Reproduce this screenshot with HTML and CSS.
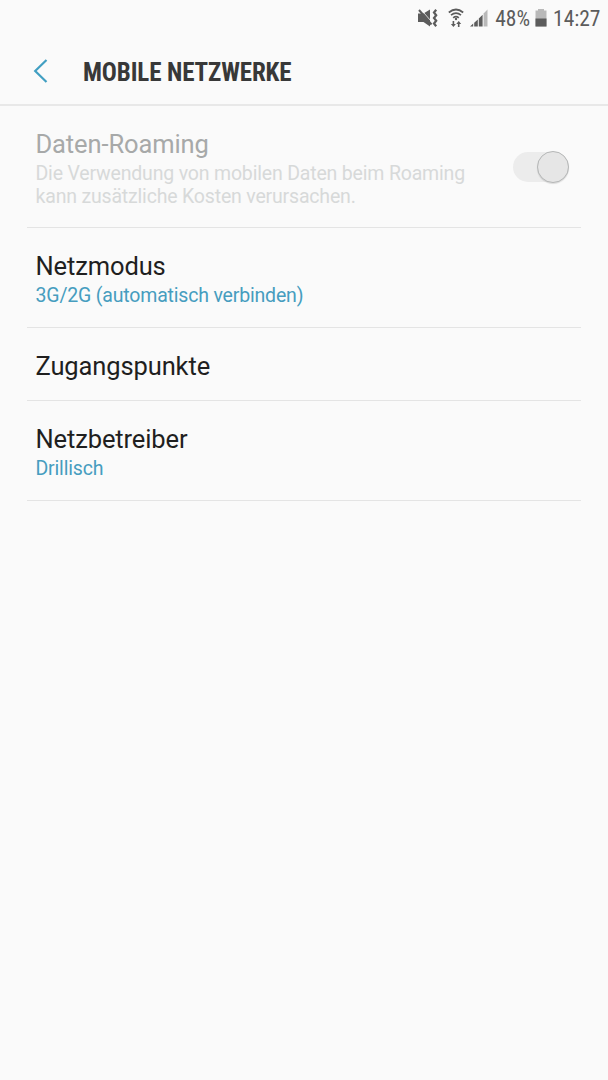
FILE: index.html
```html
<!DOCTYPE html>
<html lang="de">
<head>
  <meta charset="UTF-8" />
  <title>Mobile Netzwerke</title>
  <meta name="viewport" content="width=device-width, initial-scale=1.0" />
  <link rel="stylesheet" href="styles.css">
</head>

<body>

  <!-- Status bar -->
  <div class="status-bar">
    <svg class="icon-mute" width="20" height="18" viewBox="0 0 20 18">
      <path d="M0 4.500h5.500L12 .5v17l-6.500-4.500H0z" fill="#5c5c5c" />
      <path d="M2.500 0L14 13.200" stroke="#fafafa" stroke-width=".8" />
      <path d="M1 1l12.500 14.500" stroke="#5c5c5c" stroke-width="2" />
      <path d="M18.200.8l-2.200 2.700 2.200 2.700L16 9l2.200 2.700-2.200 2.800 2.200 2.700" fill="none" stroke="#5c5c5c" stroke-width="2.200" />
    </svg>
    <svg class="icon-wifi" width="16" height="20" viewBox="0 0 16 20">
      <g fill="none" stroke="#5c5c5c" stroke-width="1.700">
        <path d="M.8 4.500Q8-1.500 15.200 4.500" />
        <path d="M3 7.200Q8 3 13 7.200" />
        <path d="M5.200 9.800Q8 7.400 10.800 9.800" />
      </g>
      <circle cx="8" cy="11" r="1.200" fill="#5c5c5c" />
      <path d="M4.600 13v3H2.900l2.500 3 2.500-3H6.200v-3zM9.900 19v-3H8.200l2.500-3 2.500 3h-1.700v3z" fill="#5c5c5c" />
    </svg>
    <svg class="icon-signal" width="18" height="18" viewBox="0 0 18 18">
      <path d="M0 17.500h3.200v-3zM4.200 17.500h3.600v-7l-3.600 3.200zM8.800 17.500h3.800V5.800L8.800 9.500z" fill="#5c5c5c" />
      <path d="M13.600 17.500h3.900V.5l-3.900 4z" fill="#b9b9b9" />
    </svg>
    <span class="battery-level">48%</span>
    <svg class="icon-battery" width="12" height="18" viewBox="0 0 12 18">
      <path d="M3 0h6v1.500h2.500V17.500H.5V1.500H3z" fill="#b9b9b9" />
      <path d="M.5 9.500h11v8H.5z" fill="#5c5c5c" />
    </svg>
    <span class="clock">14:27</span>
  </div>

  <!-- Title bar -->
  <header>
    <svg class="back" width="16" height="26" viewBox="0 0 16 26">
      <path d="M13.500 2L2.200 13l11.300 11" fill="none" stroke="#419fc2" stroke-width="2.200" />
    </svg>
    <h1>MOBILE NETZWERKE</h1>
  </header>

  <!-- Settings -->
  <main>
    <section class="item disabled">
      <div class="text">
        <h2>Daten-Roaming</h2>
        <p>Die Verwendung von mobilen Daten beim Roaming kann zusätzliche Kosten verursachen.</p>
      </div>
      <div class="switch"><div class="thumb"></div></div>
    </section>
    <section class="item">
      <div class="text">
        <h2>Netzmodus</h2>
        <p>3G/2G (automatisch verbinden)</p>
      </div>
    </section>
    <section class="item single">
      <div class="text">
        <h2>Zugangspunkte</h2>
      </div>
    </section>
    <section class="item">
      <div class="text">
        <h2>Netzbetreiber</h2>
        <p>Drillisch</p>
      </div>
    </section>
  </main>

</body>
</html>
```
FILE: styles.css
```css
* {
  box-sizing: border-box;
}

body {
  margin: 0;
  min-height: 1080px;
  background-color: #fafafa;
  font-family: Roboto, sans-serif;
  color: #1f1f1f;
}

h1, h2, p {
  margin: 0;
  font-weight: normal;
}

/* Status bar */
.status-bar {
  display: flex;
  justify-content: flex-end;
  align-items: center;
  height: 36px;
  padding-right: 7.500px;
  font-family: "Roboto Condensed", Roboto, sans-serif;
  font-stretch: 75%;
  font-size: 21.500px;
  color: #5c5c5c;
}

.icon-mute {
  margin-right: 10px;
}

.icon-wifi {
  margin-right: 6px;
}

.icon-signal {
  margin-right: 7px;
}

.icon-battery {
  margin: 0 6px 0 5px;
}

/* Title bar */
header {
  display: flex;
  align-items: center;
  height: 70px;
  padding: 2px 0 0 33px;
  border-bottom: 2px solid #e8e8e8;
}

h1 {
  margin-left: 34px;
  padding-top: 2px;
  font-family: "Roboto Condensed", Roboto, sans-serif;
  font-stretch: 75%;
  font-size: 25px;
  font-weight: bold;
  letter-spacing: -0.120px;
  color: #383838;
}

/* Settings list */
main {
  padding: 0 27px;
}

.item {
  display: flex;
  height: 100px;
  padding: 23px 12px 0 8.500px;
  border-bottom: 1px solid #e4e4e4;
}

.item h2 {
  font-size: 25.500px;
  line-height: 30px;
  letter-spacing: -0.120px;
}

.item p {
  font-size: 19.500px;
  line-height: 23px;
  letter-spacing: -0.180px;
  margin-top: 3px;
  color: #469dbf;
}

.item.single {
  height: 73px;
}

.item.disabled {
  height: 122px;
}

.disabled .text {
  width: 450px;
}

.disabled h2 {
  color: #a7a9a9;
}

.disabled p {
  color: #d7d9d9;
}

/* Switch */
.switch {
  display: flex;
  justify-content: flex-end;
  align-items: center;
  width: 56px;
  height: 30px;
  margin: 23px 0 0 auto;
  border-radius: 15px;
  background-color: #ececec;
}

.thumb {
  flex: none;
  width: 32px;
  height: 32px;
  border: 1px solid #b5b7b7;
  border-radius: 50%;
  background-color: #e6e6e6;
  box-shadow: 0 1px 1px rgba(0, 0, 0, 0.12);
}
```
